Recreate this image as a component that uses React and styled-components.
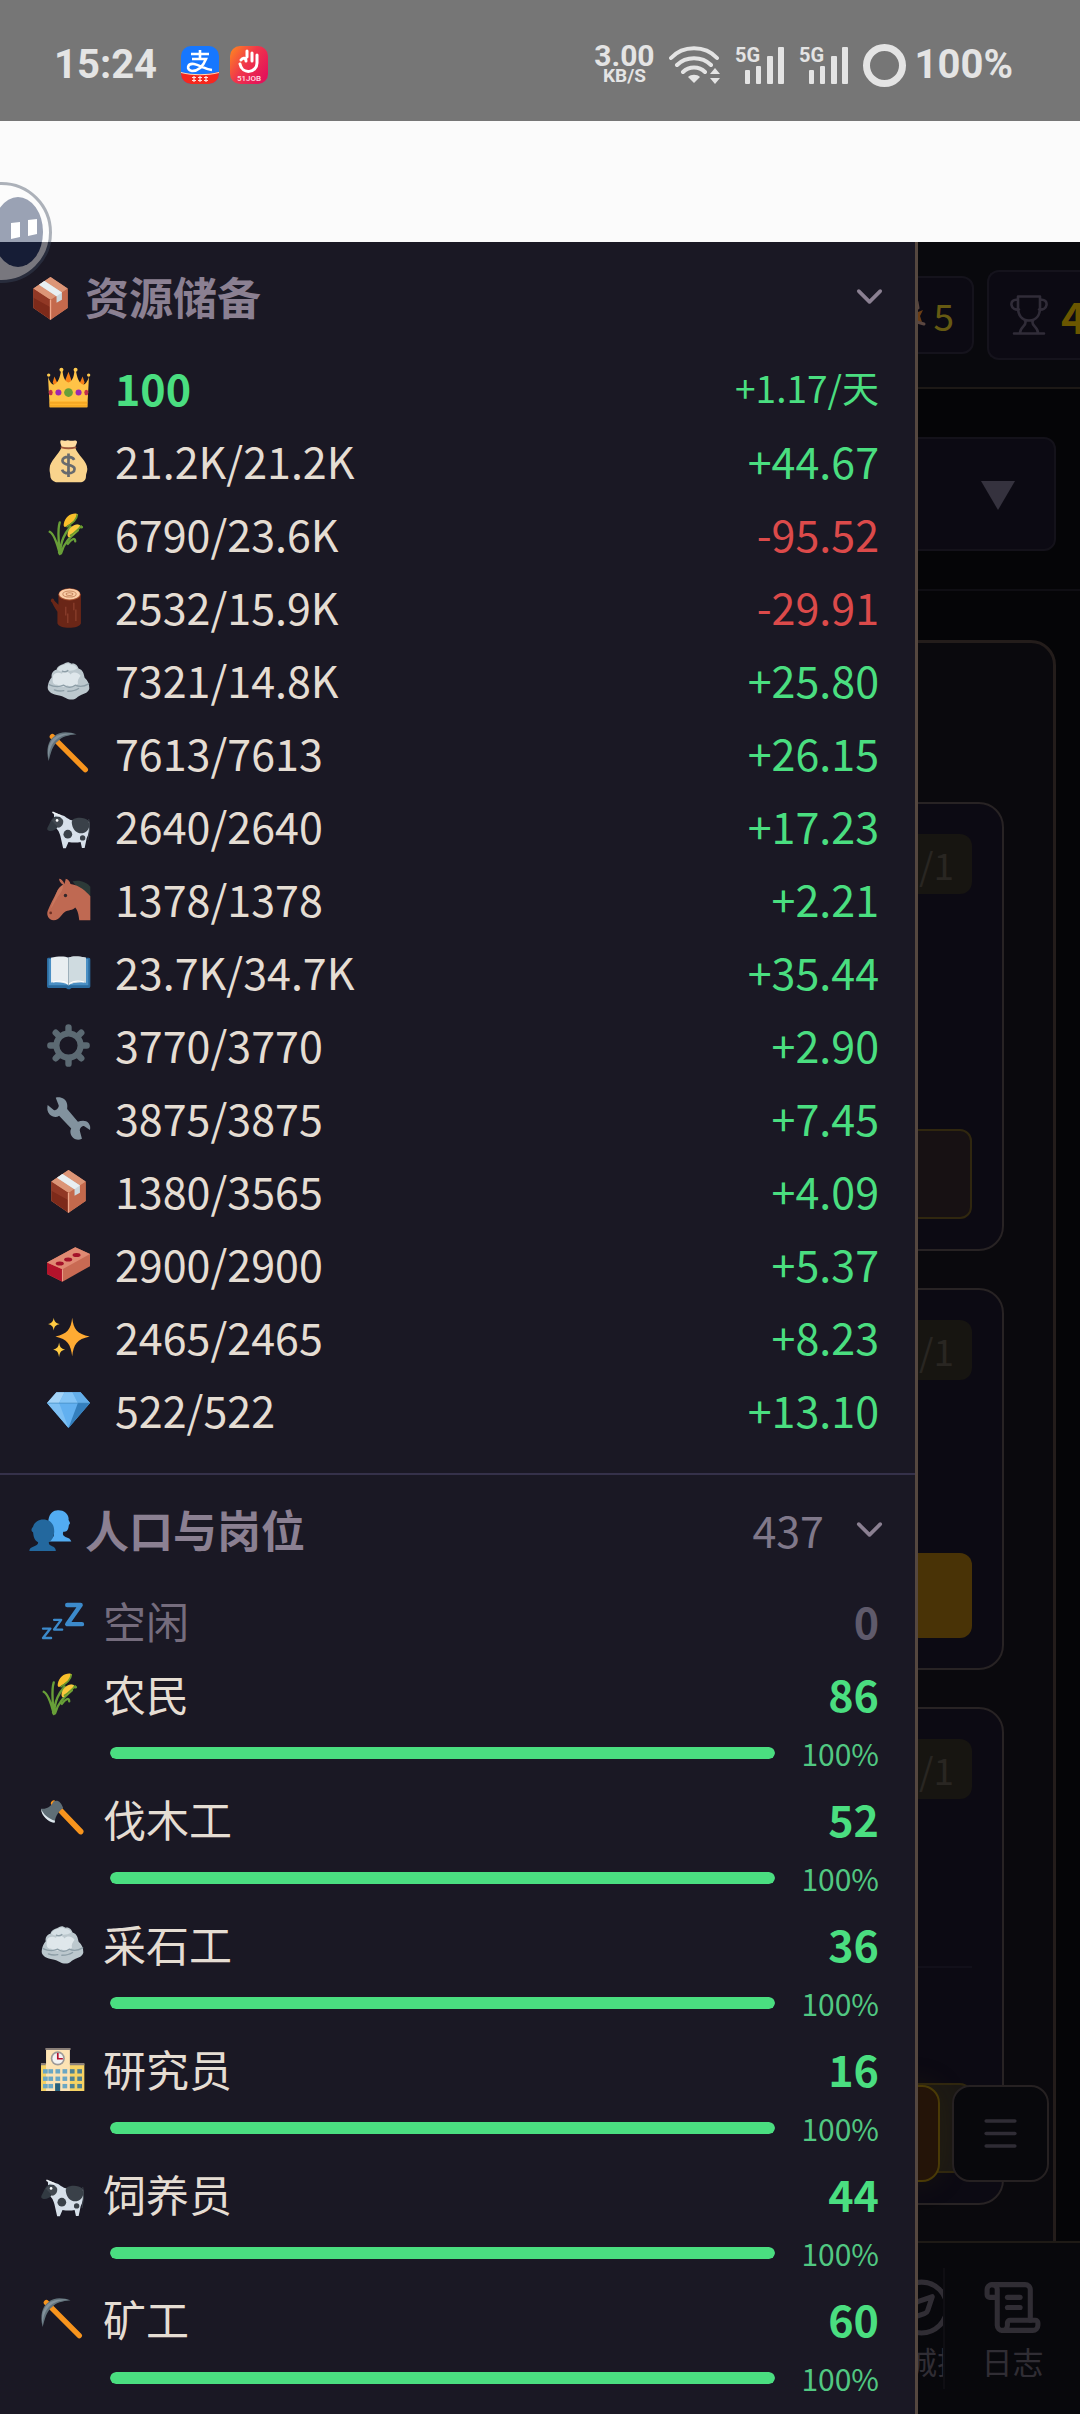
import React from "react";
import styled, { createGlobalStyle, css } from "styled-components";
import { ChevronDown, Compass, Menu, ScrollText } from "lucide-react";

const color = {
  panel: "#1a1824",
  edge: "#55473f",
  line: "#35314a",
  text: "#e5ddd3",
  muted: "#8b8092",
  faint: "#5f5a6b",
  up: "#4ade80",
  down: "#dc4a4a",
  status: "#e4e4e4",
};

const GlobalStyle = createGlobalStyle`
  *, *::before, *::after { box-sizing: border-box; }
  body { margin: 0; background: #050507; }
  button { font: inherit; color: inherit; background: none; border: 0; padding: 0; text-align: inherit; }
  ul { list-style: none; margin: 0; padding: 0; }
  svg { display: block; flex: none; }
`;

/* ---------- Emoji artwork, 128 x 128 canvas ---------- */

const art = {
  crown: (
    <>
      <path d="M64 14l9 26-9 16-10-16zM22 28l9 20-8 10-6-12zM106 28l6 18-6 12-9-10z" fill="#f57f17" />
      <path d="M3 28c4 14 10 24 18 24 12-2 18-22 21-42h4c2 22 8 34 18 36 10-2 16-14 18-36h4c3 20 9 40 21 42 8 0 14-10 18-24l-5 92H8z" fill="#ffc347" />
      <g fill="#ffca4f">
        <circle cx="5" cy="24" r="5" /><circle cx="43" cy="8" r="6" /><circle cx="85" cy="8" r="6" /><circle cx="124" cy="24" r="5" />
      </g>
      <path d="M8 102h112v18H8z" fill="#ffb52e" />
      <path d="M8 107h112M8 116h112" stroke="#e29217" strokeWidth="2" />
      <circle cx="64" cy="76" r="13" fill="#689f38" />
      <circle cx="34" cy="76" r="9" fill="#9c27b0" /><circle cx="94" cy="76" r="9" fill="#9c27b0" />
      <ellipse cx="11" cy="76" rx="6" ry="8" fill="#c2304b" /><ellipse cx="117" cy="76" rx="6" ry="8" fill="#c2304b" />
    </>
  ),
  money: (
    <>
      <path d="M43 22C36 42 8 62 8 84c-1 12 2 12 2 24 0 10 12 18 20 18h68c10 0 18-6 18-18 0-10 4-12 4-22 0-24-30-42-36-64z" fill="#f9d38c" />
      <path d="M40 2c6-3 10 2 15 0s9-2 14 0 14-2 19 1c4 4-2 10-4 19H44C42 14 38 8 40 2z" fill="#ffdca0" />
      <path d="M43 22c14 4 28 4 42 0" stroke="#a1583c" strokeWidth="5" fill="none" strokeLinecap="round" />
      <path d="M81 59c-4-8-12-9-18-9-10 0-17 5-17 12 0 16 36 8 36 24 0 9-9 13-18 13-10 0-17-4-19-11M64 40v70" stroke="#676a6e" strokeWidth="8" fill="none" />
    </>
  ),
  rice: (
    <>
      <path d="M38 122C42 80 52 62 70 40M38 122C30 90 20 62 8 56M36 118C36 70 30 52 38 28M42 120C50 90 66 74 92 52M62 92c10-14 22-20 22-8M90 38c8 0 10 6 14 4" stroke="#689f38" strokeWidth="7" fill="none" strokeLinecap="round" />
      <path d="M88 2C70 0 54 12 50 32c-2 10 4 12 10 6C72 32 88 20 92 4z" fill="#f9bf2b" />
      <path d="M90 4c0 18-18 28-32 38" stroke="#6b9b2c" strokeWidth="5" fill="none" />
      <path d="M98 36c-18-8-36 12-37 28 0 10 6 10 12 4 10-6 22-16 25-32z" fill="#fcc83d" />
      <path d="M104 38c-10 8-22 22-36 30" stroke="#6b9b2c" strokeWidth="5" fill="none" />
    </>
  ),
  wood: (
    <>
      <path d="M34 24v32L22 44c-2-8-8-8-10-3-2 4 1 7 3 8 6 14 12 20 16 28v34c4 18 66 18 70 0V24z" fill="#6a2617" />
      <path d="M56 62v26M80 50v22M62 82v28M86 70v34" stroke="#934532" strokeWidth="3" />
      <ellipse cx="67" cy="25" rx="33" ry="18" fill="#a3502f" />
      <ellipse cx="67" cy="24" rx="31" ry="16" fill="#fbcfa8" />
      <ellipse cx="67" cy="24" rx="20" ry="9" fill="none" stroke="#c98b63" strokeWidth="3" />
      <ellipse cx="67" cy="24" rx="10" ry="4" fill="none" stroke="#c98b63" strokeWidth="3" />
    </>
  ),
  rock: (
    <>
      <path d="M14 54c-2-10 4-20 14-22 4-14 16-14 22-18 8-6 16-6 22 0 14-2 18 6 22 14 14 4 16 18 18 28 10 8 14 20 14 32-2 14-20 16-34 24-10 12-26 10-36 4-8-2-10-6-20-7-18-3-34-10-34-24 0-12 6-24 12-31z" fill="#bcc8ce" />
      <path d="M18 50c4-10 18-12 26-6 8-8 20-8 26 2 8-10 24-6 30 4-6 8-10 14-8 24-10 10-24 8-32 4-12 8-26 4-30-2-10 2-16-6-12-26z" fill="#dfe7eb" />
      <path d="M30 32c8-12 14-14 22-15 8-6 14-4 20 1 10-1 14 4 18 10-10 6-20 8-28 6-8 4-20 6-32-2z" fill="#d6e0e5" />
      <path d="M6 76c16 8 30 8 44 2 10 8 24 8 34 0 14 6 30 2 40-4M22 92c10 4 20 4 28 2M62 96c14 0 24-2 32-8M46 36c6 3 12 2 16-2" stroke="#8d9ea7" strokeWidth="4" fill="none" strokeLinecap="round" />
    </>
  ),
  pick: (
    <>
      <path d="M16 14l98 98" stroke="#f7941d" strokeWidth="16" strokeLinecap="round" />
      <path d="M5 86C-4 52 4 26 20 14 40-4 66 0 88 7 62 10 46 14 34 26 16 40 12 60 5 86z" fill="#62727b" />
      <path d="M20 18C36 4 60 3 82 6 58 5 38 12 24 26 10 40 6 62 5 78 0 52 6 32 20 18z" fill="#82919b" />
    </>
  ),
  cow: (
    <>
      <path d="M20 22l22 8c14 2 20 16 38 16 20 2 34-10 46 6 4 18-2 34-8 48l-6 28h-8l-4-18c-10 2-24 2-36 0l-8 19h-8l-8-36c-4-16-10-22-14-24-6-14-4-34-6-47z" fill="#d7e0ea" />
      <path d="M2 66c8-14 12-30 24-32l14 2c2 12-2 24-8 30-8 10-20 14-28 10-4-2-4-6-2-10z" fill="#323a42" />
      <path d="M14 46c8-10 30-14 34 0 2 12-6 20-14 22z" fill="#414850" />
      <circle cx="30" cy="46" r="4" fill="#fff" />
      <path d="M76 44c12-8 36-8 46 2 8 12 4 34-16 38-16 2-26-8-30-20-2-8-4-14 0-20z" fill="#3a4149" />
      <circle cx="62" cy="87" r="13" fill="#3a4149" /><circle cx="106" cy="98" r="8" fill="#3a4149" />
      <path d="M124 42c6 20 2 40-2 62" stroke="#3a4149" strokeWidth="3" fill="none" />
      <path d="M18 22l22 10" stroke="#eef2f5" strokeWidth="5" strokeLinecap="round" />
    </>
  ),
  horse: (
    <>
      <path d="M76 10c20-6 42 2 53 16v28L86 24z" fill="#2c3a38" />
      <path d="M36 2c6 0 12 6 16 16l4-16c8 2 12 8 14 16 28 4 46 22 59 36v72H96c-2-18-4-28-12-38-8 10-20 6-32 14-10 8-14 22-32 24-16-2-22-16-18-28C10 78 20 60 28 44c4-12 12-20 20-24-6-4-12-10-12-18z" fill="#bf6952" />
      <path d="M28 44c6-12 12-20 20-24 0 14-6 24-16 36-8 12-14 28-22 36z" fill="#d08068" opacity=".6" />
      <circle cx="55" cy="52" r="5" fill="#33272a" /><circle cx="11" cy="104" r="4" fill="#6d2f24" />
    </>
  ),
  book: (
    <>
      <path d="M4 20h120c4 0 5 2 5 6v78c0 4-2 6-6 6H74c-4 0-4 4-9 4s-6-4-10-4H6c-4 0-6-2-6-6V26c0-4 1-6 4-6z" fill="#2a6a9e" />
      <path d="M5 24h118v78H5z" fill="#4a8fc4" />
      <path d="M12 20c18-4 40-6 52 0 12-6 34-4 52 0v74c-18-2-40-2-52 8-12-10-34-10-52-8z" fill="#e8eef1" />
      <path d="M64 20c12-6 34-4 52 0v74c-18-2-40-2-52 8z" fill="#cfdbe0" />
      <path d="M64 20v82" stroke="#9db0bb" strokeWidth="3" />
      <path d="M18 92c16-4 34-4 44 6M66 98c10-8 28-10 44-6" stroke="#fff" strokeWidth="3" fill="none" />
    </>
  ),
  gear: (
    <>
      <circle cx="64" cy="64" r="36" fill="none" stroke="#5c6a73" strokeWidth="18" />
      <g stroke="#5c6a73" strokeWidth="19" strokeLinecap="round">
        <path d="M64 10v14M64 104v14M10 64h14M104 64h14M26 26l9 9M93 93l9 9M102 26l-9 9M26 102l9-9" />
      </g>
    </>
  ),
  wrench: (
    <path d="M26 2c14-4 32 4 34 20 1 6 0 10 0 14l32 38c10-4 24-6 32 4 6 8 5 14 4 20L110 86c-8 0-14 8-12 16l6 22c-14 8-30 0-34-16-1-6 0-10 2-14L36 56c-8 6-20 4-28-4C0 44 0 34 2 24l18 15c8 1 15-6 15-14z" fill="#82929e" />
  ),
  box: (
    <>
      <path d="M64 0l51 34v58l-51 35-51-35V34z" fill="#d28263" />
      <path d="M13 34l51 34v59L13 92z" fill="#7d2a1a" />
      <path d="M13 34l51 34v22L13 62z" fill="#9d412b" opacity=".65" />
      <path d="M64 68l51-34v58l-51 35z" fill="#c4694c" />
      <path d="M13 34L64 0l51 34-51 34z" fill="#dc9577" />
      <path d="M46 12L30 23l52 34v20l16-9V46z" fill="#cdd8dd" />
      <path d="M46 12L30 23l52 34 16-11z" fill="#e8eff2" />
      <path d="M64 68v59" stroke="#f0a98c" strokeWidth="4" />
    </>
  ),
  brick: (
    <>
      <path d="M0 58L84 13l44 20v36l-82 46L0 92z" fill="#c96a53" />
      <path d="M0 58l46 20v37L0 92z" fill="#b3132b" />
      <path d="M0 58L84 13l44 20-82 45z" fill="#e08a73" />
      <path d="M46 78v36" stroke="#eca08c" strokeWidth="3" />
      <g fill="#a4122a"><ellipse cx="38" cy="61" rx="12" ry="6" /><ellipse cx="63" cy="49" rx="12" ry="6" /><ellipse cx="88" cy="36" rx="12" ry="6" /></g>
    </>
  ),
  sparkles: (
    <>
      <path d="M75 5c4 34 14 48 52 56-38 8-48 24-52 59-4-35-14-51-50-59 36-8 46-22 50-56z" fill="#ffab33" />
      <path d="M20 5c2 12 6 16 18 19-12 3-16 7-18 19-2-12-6-16-17-19C14 21 18 17 20 5zM36 79c2 14 6 18 18 21-12 3-16 8-18 23-2-15-6-20-18-23 12-3 16-7 18-21z" fill="#ffca42" />
    </>
  ),
  gem: (
    <>
      <path d="M28 10h72l28 32-64 74L0 42z" fill="#62b0f0" />
      <path d="M28 10L0 42h36L52 10z" fill="#a5d4f8" />
      <path d="M52 10L36 42h56L76 10z" fill="#83c4f6" />
      <path d="M76 10l16 32h36L100 10z" fill="#64aee9" />
      <path d="M0 42h36l28 74z" fill="#7ec0f4" />
      <path d="M92 42h36l-64 74z" fill="#347fbd" />
      <path d="M0 42h128" stroke="#3f86bd" strokeWidth="2" />
    </>
  ),
  people: (
    <>
      <path d="M60 94c0-10 16-10 14-22C60 62 56 46 58 28 62 8 74 0 88 1c16 0 28 10 30 24-2 6 4 10 4 14s-4 4-4 10c-2 12-6 16-16 16-4 12 4 14 14 18 6 2 8 6 10 11z" fill="#52acf2" />
      <path d="M1 122c0-16 28-12 26-26C14 88 14 78 12 66 4 62 8 54 12 50c4-14 16-22 30-22 20 0 34 12 33 38-1 14-6 24-16 30-2 14 20 8 21 26z" fill="#23689e" />
    </>
  ),
  zzz: (
    <g fill="none" stroke="#3c8acb" strokeLinejoin="round" strokeLinecap="round">
      <path d="M78 15h40L78 72h44" strokeWidth="13" />
      <path d="M39 59h21L39 88h24" strokeWidth="7" />
      <path d="M6 85h22L6 113h24" strokeWidth="7" />
    </g>
  ),
  axe: (
    <>
      <path d="M38 16l80 84" stroke="#f7941d" strokeWidth="17" strokeLinecap="round" />
      <path d="M0 32c16 2 28-4 38-22 12-6 22 2 28 20-14 10-22 22-26 44C20 70 2 54 0 32z" fill="#5f6e76" />
      <path d="M0 32c6 16 22 30 42 36l-2 6C20 70 2 54 0 32z" fill="#dfe8ee" />
    </>
  ),
  school: (
    <>
      <path d="M0 47h129v81H0z" fill="#f6d263" />
      <path d="M15 3h71v125H15z" fill="#fde3b4" />
      <path d="M13 0h75v6H13zM86 45h43v6H86zM0 45h14v6H0z" fill="#8a7f78" />
      <circle cx="50" cy="31" r="21" fill="#9e9a98" /><circle cx="50" cy="31" r="16" fill="#f3f3f3" />
      <path d="M50 15v17h15" stroke="#b5102d" strokeWidth="5" fill="none" />
      <g fill="#6ba7c4">
        {[63, 85, 107].map((y) =>
          [6, 22, 43, 64, 86, 108].map((x) => <rect key={`${x}-${y}`} x={x} y={y} width="14" height="13" fill={x > 80 ? "#4e8193" : undefined} />)
        )}
      </g>
      <path d="M42 105h15v23H42z" fill="#27607c" />
    </>
  ),
};

const EmojiSvg = styled.svg`
  width: 43px;
  height: 43px;
  overflow: visible;
`;

const Emoji = ({ name }) => (
  <EmojiSvg viewBox="0 0 128 128" aria-hidden="true">{art[name]}</EmojiSvg>
);

/* ---------- Phone shell ---------- */

const Shell = styled.div`
  position: relative;
  display: flex;
  flex-direction: column;
  height: 100vh;
  overflow: hidden;
  font-family: "Noto Sans CJK SC", sans-serif;
`;

const StatusBar = styled.header`
  display: flex;
  align-items: center;
  justify-content: space-between;
  flex: none;
  height: 121px;
  padding: 9px 67px 0 54px;
  background: #767676;
  color: ${color.status};
  font-family: Roboto, sans-serif;
`;

const StatusGroup = styled.div`
  display: flex;
  align-items: center;
  gap: ${(p) => p.$gap}px;
`;

const StatusText = styled.span`
  font-size: 40px;
  line-height: 48px;
  font-weight: 700;
`;

const NetSpeed = styled.div`
  display: flex;
  flex-direction: column;
  align-items: center;
  font-weight: 700;
`;

const SpeedValue = styled.span`
  font-size: 30px;
  line-height: 22px;
`;

const SpeedUnit = styled.span`
  font-size: 19px;
  line-height: 18px;
`;

const PageTop = styled.div`
  flex: none;
  height: 121px;
  background: #fbfbfb;
`;

const FloatingBall = styled.svg`
  position: absolute;
  z-index: 3;
  top: 182px;
  left: -49px;
  width: 101px;
  height: 101px;
`;

const AppArea = styled.div`
  position: relative;
  flex: 1;
  min-height: 0;
  display: flex;
  flex-direction: column;
  background: #050507;
`;

/* ---------- Drawer ---------- */

const Drawer = styled.aside`
  position: absolute;
  z-index: 2;
  top: 0;
  bottom: 0;
  left: 0;
  width: 85%;
  overflow: hidden;
  background: ${color.panel};
  border-right: 3px solid ${color.edge};
  color: ${color.text};
  font-size: 43px;
  line-height: 64px;
`;

const Section = styled.section`
  & + & {
    border-top: 2px solid ${color.line};
    margin-top: 28px;
  }
`;

const SectionHeader = styled.button`
  display: flex;
  align-items: center;
  width: 100%;
  height: 108px;
  padding: 0 24px;
  color: ${color.muted};
`;

const SectionTitle = styled.span`
  flex: 1;
  padding-left: 8px;
  font-size: 44px;
  font-weight: 700;
`;

const SectionCount = styled.span`
  margin-right: 24px;
  color: #80788a;
`;

const IconSlot = styled.span`
  display: flex;
  justify-content: center;
  flex: none;
  width: ${(p) => (p.$wide ? 65 : 53)}px;
  padding-top: 4px;
`;

const Row = styled.div`
  display: flex;
  align-items: center;
  gap: 14px;
  height: 73px;
  padding: 0 36px;
`;

const Name = styled.span`
  flex: 1;
  ${(p) => p.$muted && css`color: #756c7d;`}
  ${(p) => p.$strong && css`color: ${color.up}; font-weight: 700;`}
`;

const Rate = styled.span`
  color: ${(p) => (p.$down ? color.down : color.up)};
  font-size: ${(p) => (p.$small ? 37 : 43)}px;
`;

const Workers = styled.span`
  font-weight: 700;
  color: ${(p) => (p.$idle ? color.faint : color.up)};
`;

const FillRow = styled.div`
  display: flex;
  align-items: center;
  gap: 24px;
  height: 48px;
  margin-bottom: 4px;
  padding: 0 36px 0 110px;
`;

const Track = styled.div`
  flex: 1;
  height: 12px;
  border-radius: 6px;
  overflow: hidden;
  background: #2b2838;
`;

const Fill = styled.div`
  height: 100%;
  border-radius: 6px;
  background: ${color.up};
`;

const Percent = styled.span`
  width: 80px;
  text-align: right;
  font-size: 30px;
  line-height: 46px;
  color: #51c882;
`;

/* ---------- Dimmed game page ---------- */

const TopBar = styled.div`
  display: flex;
  align-items: center;
  justify-content: flex-end;
  gap: 13px;
  flex: none;
  height: 147px;
  background: #09090d;
  border-bottom: 2px solid #1d1916;
`;

const Pill = styled.div`
  display: flex;
  align-items: center;
  justify-content: flex-end;
  gap: 7px;
  width: 130px;
  height: 78px;
  padding-right: 18px;
  border: 2px solid #15131c;
  border-radius: 12px;
  background: #0c0a13;
  color: #665a12;
  font-size: 37px;
  line-height: 54px;
`;

const TrophyPill = styled(Pill)`
  justify-content: flex-start;
  gap: 13px;
  width: 93px;
  height: 90px;
  padding: 0 0 0 21px;
  overflow: hidden;
  border-right: 0;
  border-radius: 12px 0 0 12px;
  color: #6a5600;
  font-size: 43px;
  font-weight: 700;
`;

const Main = styled.main`
  position: relative;
  flex: 1;
  min-height: 0;
  overflow: hidden;
`;

const Picker = styled.div`
  display: grid;
  align-items: center;
  padding: 48px 24px 38px;
  border-bottom: 2px solid #0f0e13;
`;

const PickerSelect = styled.select`
  grid-area: 1 / 1;
  width: 100%;
  height: 114px;
  appearance: none;
  border: 2px solid #14121a;
  border-radius: 12px;
  background: #0c0a13;
`;

const PickerArrow = styled.svg`
  grid-area: 1 / 1;
  justify-self: end;
  margin-top: 2px;
  margin-right: 41px;
  pointer-events: none;
`;

const Panel = styled.div`
  display: flex;
  flex-direction: column;
  gap: 37px;
  height: 1700px;
  margin: 49px 24px 0;
  padding: 159px 49px 0;
  border: 3px solid #241d1b;
  border-radius: 25px;
  background: #0a090d;
`;

const Card = styled.article`
  display: flex;
  flex-direction: column;
  flex: none;
  height: ${(p) => p.$height}px;
  padding: 30px;
  border: 2px solid #282324;
  border-radius: 25px;
  background: #0c0a13;
`;

const Badge = styled.span`
  align-self: flex-end;
  padding: 3px 18px 3px 24px;
  border-radius: 12px;
  background: #171511;
  color: #292622;
  font-size: 37px;
  line-height: 54px;
`;

const CardLine = styled.hr`
  width: 100%;
  margin: 167px 0 0;
  border: 0;
  border-top: 2px solid #12101a;
`;

const CardAction = styled.button`
  height: ${(p) => (p.$solid ? 85 : 90)}px;
  margin-top: auto;
  border-radius: 12px;
  border: ${(p) => (p.$solid ? "0" : "2px solid #30270f")};
  background: ${(p) => (p.$solid ? "#493306" : p.$olive ? "#1b1814" : "#171113")};
`;

const FloatBar = styled.div`
  position: absolute;
  right: 31px;
  bottom: 59px;
  display: flex;
  gap: 12px;
`;

const FloatButton = styled.button`
  display: grid;
  place-items: center;
  width: 97px;
  height: 97px;
  border-radius: 18px;
  border: 2px solid ${(p) => (p.$gold ? "#4a3a06" : "#262122")};
  background: ${(p) => (p.$gold ? "#241408" : "#08080c")};
  box-shadow: ${(p) => (p.$gold ? "0 0 30px rgba(74, 58, 6, 0.2)" : "none")};
  color: #2f2c35;
`;

const BottomNav = styled.nav`
  display: flex;
  flex: none;
  height: 173px;
  border-top: 2px solid #1e1a16;
  background: #08080c;
`;

const TabScroller = styled.div`
  flex: 1;
  min-width: 0;
  display: flex;
  overflow: hidden;
  & > :last-child {
    margin-left: auto;
    margin-right: -46px;
  }
`;

const NavRule = styled.span`
  width: 2px;
  margin: 25px 0;
  background: #0f0e13;
`;

const Tab = styled.button`
  display: flex;
  flex-direction: column;
  align-items: center;
  flex: none;
  width: 135px;
  padding-top: 34px;
  color: #302d34;
  font-size: 31px;
  line-height: 46px;
`;

/* ---------- Status icons ---------- */

const StatusSvg = styled.svg`
  overflow: visible;
`;

const WifiIcon = () => (
  <svg width="52" height="38" viewBox="0 0 52 38" fill="none" stroke={color.status} strokeWidth="4" strokeLinecap="round" aria-hidden="true">
    <path d="M2 12C14-1 36-1 48 12M8 19c9-9 25-9 34 0M14 26c6-6 16-6 22 0" />
    <path d="M19 31c3-3 9-3 12 0l-6 6z" fill={color.status} stroke="none" />
    <path d="M46 22l5 6H41zM46 38l5-6H41z" fill={color.status} stroke="none" />
  </svg>
);

const SignalIcon = () => (
  <StatusSvg width="50" height="38" viewBox="0 0 50 38" fill={color.status} aria-hidden="true">
    <text x="0" y="16" fontSize="20" fontWeight="700">5G</text>
    <rect x="10" y="24" width="5" height="14" rx="1" />
    <rect x="21" y="20" width="5" height="18" rx="1" />
    <rect x="32" y="10" width="6" height="28" rx="1" />
    <rect x="43" y="1" width="6" height="37" rx="1" />
  </StatusSvg>
);

const PayIcon = () => (
  <svg width="38" height="38" viewBox="0 0 38 38" aria-hidden="true">
    <defs><clipPath id="pay"><rect width="38" height="38" rx="10" /></clipPath></defs>
    <g clipPath="url(#pay)">
      <path d="M0 0h38v38H0z" fill="#1677ff" />
      <path d="M0 27c12 2 26 2 38-1v12H0z" fill="#f5281e" />
      <path d="M0 26c12 3 26 3 38 0v1c-12 3-26 3-38 0z" fill="#ffd9b0" />
      <g fill="none" stroke="#fff">
        <path d="M10 8h18M19 4v9M11 13h14c-2 5-6 12-14 12-6-1-5-8 2-7 6 1 10 5 18 6" strokeWidth="2.6" />
        <path d="M11 31.500h4M11 34.500h4M17 31.500h4M17 34.500h4M23 31.500h4M23 34.500h4M13 30v6M19 30v6M25 30v6" strokeWidth="1.2" opacity=".85" />
      </g>
    </g>
  </svg>
);

const JobIcon = () => (
  <svg width="38" height="38" viewBox="0 0 38 38" aria-hidden="true">
    <defs>
      <linearGradient id="job" x1="0" y1="0" x2="1" y2=".7">
        <stop offset="0" stopColor="#ff8a1e" /><stop offset=".5" stopColor="#f0374a" /><stop offset="1" stopColor="#e3125a" />
      </linearGradient>
    </defs>
    <rect width="38" height="38" rx="10" fill="url(#job)" />
    <path d="M11 14c2-3 5-2 5 1M17 5v6M22 7v8M27 9v8c0 10-15 12-17 1" fill="none" stroke="#fff" strokeWidth="3" strokeLinecap="round" />
    <text x="19" y="35" textAnchor="middle" fontSize="8" fontWeight="500" fill="#ffdfe4">51JOB</text>
  </svg>
);

const BatteryRing = () => (
  <svg width="43" height="43" viewBox="0 0 43 43" aria-hidden="true">
    <circle cx="21.5" cy="21.5" r="18" fill="none" stroke={color.status} strokeWidth="7" />
  </svg>
);

const TrophyIcon = () => (
  <svg width="38" height="40" viewBox="0 0 38 40" fill="none" stroke="#302c38" strokeWidth="2.6" strokeLinecap="round" strokeLinejoin="round" aria-hidden="true">
    <path d="M8 1.5h22v11c0 8-4 13-11 13S8 20.500 8 12.500zM8 5C3 4 1 7 1.500 10S5 15 9 14.500M30 5c5-1 7 2 6.500 5S33 15 29 14.500M15 25.500c3 5-5 6-5 12.500M23 25.500c-3 5 5 6 5 12.500M4 38.500h30" />
  </svg>
);

const SparkIcon = () => (
  <svg width="28" height="32" viewBox="0 0 28 32" aria-hidden="true">
    <path d="M10 10l10 3 5-2-3 6 2 6-6-1z" fill="#6b3d14" />
    <path d="M19 3l1 6M19 23l7 2" stroke="#5a4640" strokeWidth="3" strokeLinecap="round" />
  </svg>
);

/* ---------- Data ---------- */

const resources = [
  { icon: "crown", amount: "100", rate: "+1.17/天", special: true },
  { icon: "money", amount: "21.2K/21.2K", rate: "+44.67" },
  { icon: "rice", amount: "6790/23.6K", rate: "-95.52" },
  { icon: "wood", amount: "2532/15.9K", rate: "-29.91" },
  { icon: "rock", amount: "7321/14.8K", rate: "+25.80" },
  { icon: "pick", amount: "7613/7613", rate: "+26.15" },
  { icon: "cow", amount: "2640/2640", rate: "+17.23" },
  { icon: "horse", amount: "1378/1378", rate: "+2.21" },
  { icon: "book", amount: "23.7K/34.7K", rate: "+35.44" },
  { icon: "gear", amount: "3770/3770", rate: "+2.90" },
  { icon: "wrench", amount: "3875/3875", rate: "+7.45" },
  { icon: "box", amount: "1380/3565", rate: "+4.09" },
  { icon: "brick", amount: "2900/2900", rate: "+5.37" },
  { icon: "sparkles", amount: "2465/2465", rate: "+8.23" },
  { icon: "gem", amount: "522/522", rate: "+13.10" },
];

const jobs = [
  { icon: "rice", name: "农民", count: 86, fill: 100 },
  { icon: "axe", name: "伐木工", count: 52, fill: 100 },
  { icon: "rock", name: "采石工", count: 36, fill: 100 },
  { icon: "school", name: "研究员", count: 16, fill: 100 },
  { icon: "cow", name: "饲养员", count: 44, fill: 100 },
  { icon: "pick", name: "矿工", count: 60, fill: 100 },
];

/* ---------- Page ---------- */

const SidePanel = () => (
  <Drawer>
    <Section>
      <SectionHeader type="button" aria-expanded="true">
        <IconSlot><Emoji name="box" /></IconSlot>
        <SectionTitle>资源储备</SectionTitle>
        <ChevronDown size={43} />
      </SectionHeader>
      <ul>
        {resources.map((r) => (
          <li key={r.icon}>
            <Row>
              <IconSlot $wide><Emoji name={r.icon} /></IconSlot>
              <Name $strong={r.special}>{r.amount}</Name>
              <Rate $small={r.special} $down={r.rate.startsWith("-")}>{r.rate}</Rate>
            </Row>
          </li>
        ))}
      </ul>
    </Section>
    <Section>
      <SectionHeader type="button" aria-expanded="true">
        <IconSlot><Emoji name="people" /></IconSlot>
        <SectionTitle>人口与岗位</SectionTitle>
        <SectionCount>437</SectionCount>
        <ChevronDown size={43} />
      </SectionHeader>
      <Row>
        <IconSlot><Emoji name="zzz" /></IconSlot>
        <Name $muted>空闲</Name>
        <Workers $idle>0</Workers>
      </Row>
      <ul>
        {jobs.map((j) => (
          <li key={j.name}>
            <Row>
              <IconSlot><Emoji name={j.icon} /></IconSlot>
              <Name>{j.name}</Name>
              <Workers>{j.count}</Workers>
            </Row>
            <FillRow>
              <Track><Fill style={{ width: `${j.fill}%` }} /></Track>
              <Percent>{j.fill}%</Percent>
            </FillRow>
          </li>
        ))}
      </ul>
    </Section>
  </Drawer>
);

export default function App() {
  return (
    <Shell>
      <GlobalStyle />
      <StatusBar>
        <StatusGroup $gap={24}>
          <StatusText>15:24</StatusText>
          <StatusGroup $gap={11}>
            <PayIcon />
            <JobIcon />
          </StatusGroup>
        </StatusGroup>
        <StatusGroup $gap={14}>
          <NetSpeed>
            <SpeedValue>3.00</SpeedValue>
            <SpeedUnit>KB/S</SpeedUnit>
          </NetSpeed>
          <WifiIcon />
          <SignalIcon />
          <SignalIcon />
          <StatusGroup $gap={9}>
            <BatteryRing />
            <StatusText>100%</StatusText>
          </StatusGroup>
        </StatusGroup>
      </StatusBar>
      <PageTop />
      <AppArea>
        <TopBar>
          <Pill><SparkIcon />5</Pill>
          <TrophyPill><TrophyIcon />4</TrophyPill>
        </TopBar>
        <Main>
          <Picker>
            <PickerSelect aria-label="选择" />
            <PickerArrow width="34" height="29" viewBox="0 0 34 29" aria-hidden="true">
              <path d="M0 0h34L17 29z" fill="#35323e" />
            </PickerArrow>
          </Picker>
          <Panel>
            <Card $height={449}>
              <Badge>/1</Badge>
              <CardAction type="button" aria-label="建造" />
            </Card>
            <Card $height={382}>
              <Badge>/1</Badge>
              <CardAction type="button" aria-label="建造" $solid />
            </Card>
            <Card $height={498}>
              <Badge>/1</Badge>
              <CardLine />
              <CardAction type="button" aria-label="建造" $olive />
            </Card>
          </Panel>
          <FloatBar>
            <FloatButton type="button" aria-label="快捷" $gold />
            <FloatButton type="button" aria-label="菜单"><Menu size={43} /></FloatButton>
          </FloatBar>
        </Main>
        <BottomNav>
          <TabScroller>
            <Tab type="button"><Compass size={61} />古城探</Tab>
          </TabScroller>
          <NavRule />
          <Tab type="button"><ScrollText size={61} />日志</Tab>
        </BottomNav>
        <SidePanel />
      </AppArea>
      <FloatingBall viewBox="0 0 101 101" aria-hidden="true">
        <g opacity=".41">
          <circle cx="50.500" cy="50.500" r="49" fill="#fff" stroke="#3d4a5e" strokeWidth="3" />
          <ellipse cx="67" cy="50" rx="25" ry="35" fill="#112550" />
        </g>
        <path d="M60 41l9-1v15l-9 2zM77 38l9-1v15l-9 2z" fill="#fff" />
      </FloatingBall>
    </Shell>
  );
}
